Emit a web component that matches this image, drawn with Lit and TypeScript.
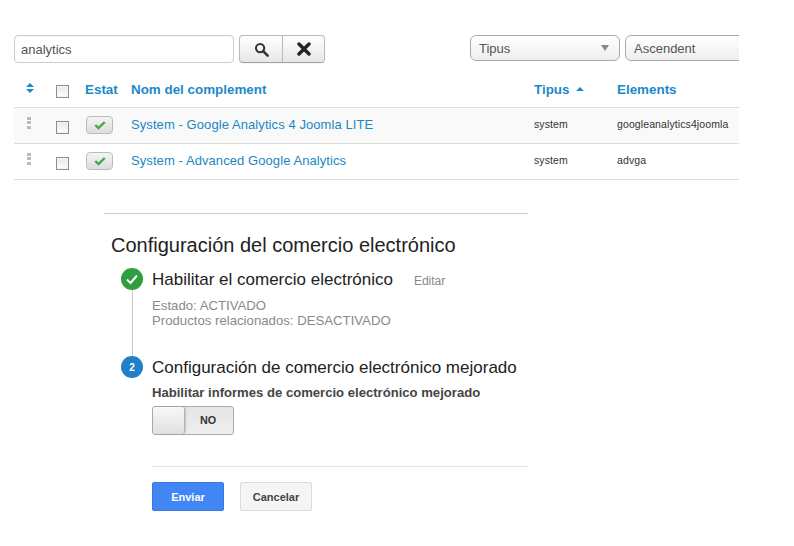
import { LitElement, html, css } from "lit";
import { customElement } from "lit/decorators.js";

const check = html`<svg class="chk" viewBox="0 0 14 11" width="12" height="10"><path d="M1.5 5.5 5.2 9 12.5 2" fill="none" stroke="#46a546" stroke-width="2.8"/></svg>`;

@customElement("app-root")
export class AppRoot extends LitElement {
  static styles = css`
    :host { display: block; width: 794px; height: 546px; background: #fff; overflow: hidden; font-family: "Liberation Sans", Arial, sans-serif; color: #333; }
    .admin { width: 725px; margin-left: 14px; padding-top: 35px; overflow: hidden; }
    .toolbar { display: flex; align-items: flex-start; height: 38px; }
    .toolbar > * { flex: none; }
    .search { box-sizing: border-box; width: 220px; height: 28px; border: 1px solid #ccc; border-radius: 4px; padding: 1px 6px 0; font-size: 13px; line-height: 26px; color: #555; box-shadow: inset 0 1px 1px rgba(0,0,0,.05); }
    .btns { display: flex; margin-left: 5px; height: 28px; box-sizing: border-box; border: 1px solid #bbb; border-bottom-color: #a2a2a2; border-radius: 4px; background: linear-gradient(#fff, #e6e6e6); box-shadow: 0 1px 2px rgba(0,0,0,.05); }
    .btns div { box-sizing: border-box; width: 42px; display: flex; align-items: center; justify-content: center; }
    .btns div + div { border-left: 1px solid #bbb; }
    .sel { box-sizing: border-box; height: 26px; border: 1px solid #aaa; border-radius: 6px; background: linear-gradient(#fff, #eee); font-size: 13px; line-height: 24px; padding: 1px 0 0 8px; color: #555; display: flex; justify-content: space-between; align-items: center; }
    .sel.a { width: 150px; margin-left: 145px; padding-right: 10px; }
    .sel.b { width: 130px; margin-left: 5px; }
    .tri { width: 0; height: 0; margin-top: -2px; border-left: 4px solid transparent; border-right: 4px solid transparent; border-top: 6px solid #888; }
    .row { display: grid; grid-template-columns: 34px 37px 46px 403px 83px 1fr; align-items: center; height: 36px; box-sizing: border-box; padding-bottom: 2px; border-bottom: 1px solid #ddd; font-size: 10.5px; letter-spacing: .1px; }
    .row.head { height: 35px; font-size: 13.4px; font-weight: 700; color: #1b8ac9; letter-spacing: 0; }
    .row.alt { background: #f9f9f9; }
    .row > .first { padding-left: 12px; display: flex; }
    .name { font-size: 13px; color: #1b87c2; letter-spacing: .08px; }
    .small { padding-bottom: 2px; }
    .cell-b { display: flex; }
    .box { box-sizing: border-box; width: 13px; height: 13px; margin: 5px 0 0 8px; border: 1px solid #8e8e8e; background: linear-gradient(#e8e8e8, #fff); box-shadow: inset 0 0 0 1px #f4f4f4; }
    .status { box-sizing: border-box; width: 27px; height: 18px; margin-left: 1px; border: 1px solid #bbb; border-radius: 4px; background: linear-gradient(#f4f4f4, #ddd); display: flex; align-items: center; justify-content: center; }
    .grip { width: 4px; height: 12px; margin: -3px 0 0 1px; background: repeating-linear-gradient(#bbb 0 3px, #fff 3px 4.5px); }
    .up { display: inline-block; margin-left: 7px; vertical-align: 3px; width: 0; height: 0; border-left: 4px solid transparent; border-right: 4px solid transparent; border-bottom: 4px solid #1b8ac9; }
    .sort { display: flex; flex-direction: column; gap: 2px; margin-top: -2px; }
    .sort i { width: 0; height: 0; border-left: 4px solid transparent; border-right: 4px solid transparent; }
    .sort i:first-child { border-bottom: 4px solid #1b8ac9; }
    .sort i:last-child { border-top: 4px solid #1b8ac9; }

    .ga { width: 424px; margin: 33px 0 0 104px; border-top: 1px solid #ccc; color: #212121; }
    h1 { margin: 20px 0 0 7px; font-size: 20px; font-weight: 400; line-height: 22px; color: #222; }
    .steps { display: grid; grid-template-columns: 48px 1fr; margin-top: 12px; }
    .rail { display: flex; flex-direction: column; align-items: center; padding-left: 20px; width: 16px; box-sizing: content-box; }
    .dot { flex: none; width: 22px; height: 22px; border-radius: 50%; display: flex; align-items: center; justify-content: center; color: #fff; font-size: 10px; font-weight: 700; }
    .dot.g { background: #2e9e3e; }
    .dot.b { background: #1f7fc8; }
    .line { width: 1px; flex: 1; background: #c8c8c8; }
    .st { font-size: 17px; line-height: 22px; padding-top: 1px; color: #222; display: flex; }
    .st span { margin-left: 21px; font-size: 12px; color: #888; line-height: 24px; }
    .desc { font-size: 13.2px; line-height: 15px; color: #8a8a8a; margin-top: 5px; height: 58px; }
    .lbl { font-size: 13.1px; font-weight: 700; color: #444; margin-top: 6px; line-height: 15px; }
    .toggle { box-sizing: border-box; width: 82px; height: 29px; margin-top: 6px; border: 1px solid #aaa; border-radius: 3px; background: linear-gradient(#e6e6e6, #eee); display: flex; }
    .knob { box-sizing: border-box; width: 32px; border-right: 1px solid #b0b0b0; border-radius: 3px; background: linear-gradient(#f8f8f8, #e0e0e0); box-shadow: 1px 0 2px rgba(0,0,0,.15); }
    .toggle b { flex: 1; padding-right: 2px; text-align: center; font-size: 10.8px; line-height: 27px; color: #333; }
    .foot { margin: 31px 0 0 48px; border-top: 1px solid #e5e5e5; padding-top: 15px; display: flex; gap: 16px; }
    .btn { box-sizing: border-box; width: 72px; height: 29px; border-radius: 2px; font-size: 11px; font-weight: 700; display: flex; align-items: center; justify-content: center; }
    .btn.p { background: #4285f4; border: 1px solid #3a78dc; color: #fff; }
    .btn.s { background: #f5f5f5; border: 1px solid #dcdcdc; color: #444; }
  `;

  private row(name: string, el: string, alt: boolean) {
    return html`<div class="row ${alt ? "alt" : ""}">
      <div class="first"><div class="grip"></div></div>
      <div class="cell-b"><div class="box"></div></div>
      <div><div class="status">${check}</div></div>
      <div class="name">${name}</div>
      <div class="small">system</div>
      <div class="small">${el}</div>
    </div>`;
  }

  render() {
    return html`
      <div class="admin">
        <div class="toolbar">
          <div class="search">analytics</div>
          <div class="btns">
            <div><svg viewBox="0 0 16 16" width="15" height="15"><circle cx="6.5" cy="6.5" r="4.4" fill="none" stroke="#333" stroke-width="2.2"/><path d="M10 10l4.5 4.5" stroke="#333" stroke-width="2.8" stroke-linecap="round"/></svg></div>
            <div><svg viewBox="0 0 14 14" width="14" height="14"><path d="M2 2l10 10M12 2 2 12" stroke="#222" stroke-width="3.4" stroke-linecap="round"/></svg></div>
          </div>
          <div class="sel a">Tipus<span class="tri"></span></div>
          <div class="sel b">Ascendent</div>
        </div>
        <div class="row head">
          <div class="first"><div class="sort"><i></i><i></i></div></div>
          <div class="cell-b"><div class="box"></div></div>
          <div>Estat</div>
          <div>Nom del complement</div>
          <div>Tipus<span class="up"></span></div>
          <div>Elements</div>
        </div>
        ${this.row("System - Google Analytics 4 Joomla LITE", "googleanalytics4joomla", true)}
        ${this.row("System - Advanced Google Analytics", "advga", false)}
      </div>
      <div class="ga">
        <h1>Configuración del comercio electrónico</h1>
        <div class="steps">
          <div class="rail"><div class="dot g"><svg viewBox="0 0 14 14" width="14" height="14"><path d="M2 7.5 5.5 11 12 3.5" fill="none" stroke="#fff" stroke-width="2"/></svg></div><div class="line"></div></div>
          <div>
            <div class="st">Habilitar el comercio electrónico<span>Editar</span></div>
            <div class="desc">Estado: ACTIVADO<br />Productos relacionados: DESACTIVADO</div>
          </div>
          <div class="rail"><div class="dot b">2</div></div>
          <div>
            <div class="st">Configuración de comercio electrónico mejorado</div>
            <div class="lbl">Habilitar informes de comercio electrónico mejorado</div>
            <div class="toggle"><div class="knob"></div><b>NO</b></div>
          </div>
        </div>
        <div class="foot"><div class="btn p">Enviar</div><div class="btn s">Cancelar</div></div>
      </div>
    `;
  }
}
